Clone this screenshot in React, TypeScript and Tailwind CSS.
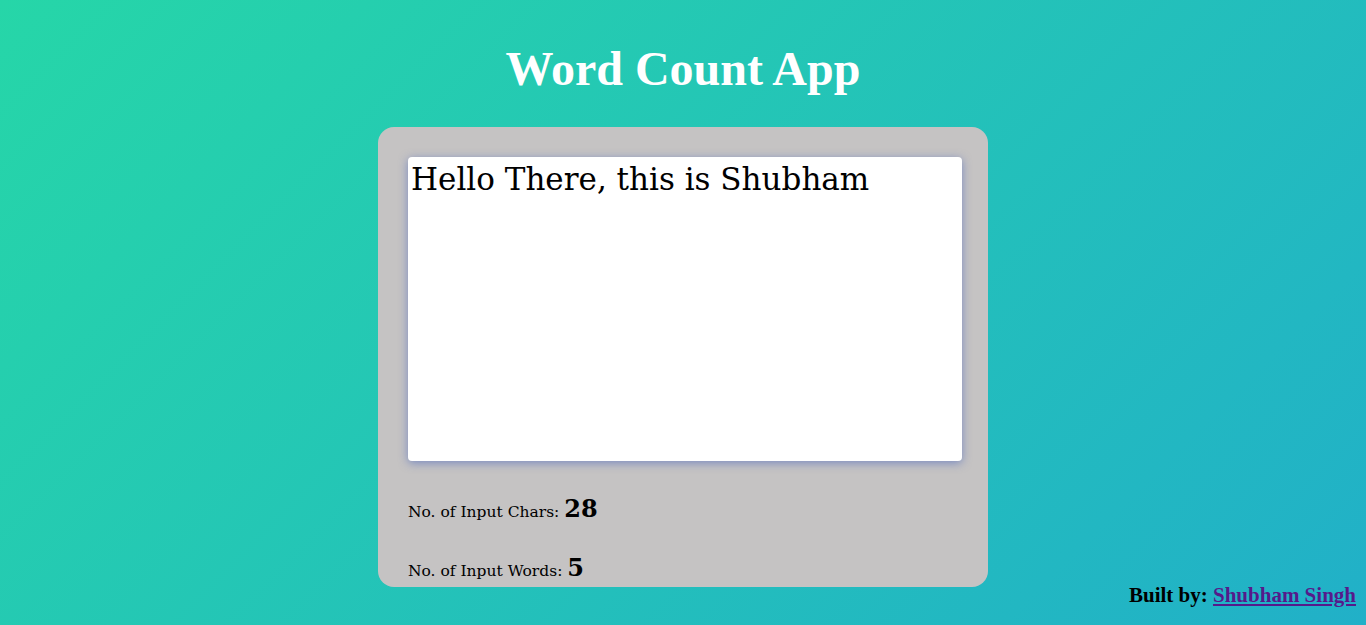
import { useState } from "react";

export default function App() {
  const [text, setText] = useState("Hello There, this is Shubham");

  const chars = text.length;
  const words = text.trim() ? text.trim().split(/\s+/).length : 0;

  return (
    <div className="relative flex min-h-[625px] flex-col items-center bg-[linear-gradient(135deg,#26d6a8_0%,#21b0c8_100%)] font-['Liberation_Serif',serif]">
      <h1 className="mt-[41px] text-[48px] font-bold leading-[56px] text-white">
        Word Count App
      </h1>

      <div className="mt-[30px] flex h-[460px] w-[610px] flex-col rounded-2xl bg-[#c5c3c3] pl-[30px] pr-[26px] pt-[30px] font-['DejaVu_Serif',serif]">
        <textarea
          value={text}
          onChange={(e) => setText(e.target.value)}
          className="h-[304px] w-full shrink-0 resize-none rounded bg-white px-[3px] py-0 text-[31px] leading-[44px] text-black shadow-[0_2px_10px_rgba(70,100,190,0.6)] outline-none"
        />

        <p className="mt-[34px] text-[15.5px] leading-[28px] text-black">
          No. of Input Chars:{" "}
          <span className="text-[24px] font-bold">{chars}</span>
        </p>

        <p className="mt-[28px] text-[15.5px] leading-[28px] text-black">
          No. of Input Words:{" "}
          <span className="text-[24px] font-bold">{words}</span>
        </p>
      </div>

      <footer className="absolute bottom-[14px] right-[10px] text-[21px] font-bold text-black">
        Built by:{" "}
        <a href="#" className="text-[#551a8b] underline">
          Shubham Singh
        </a>
      </footer>
    </div>
  );
}
